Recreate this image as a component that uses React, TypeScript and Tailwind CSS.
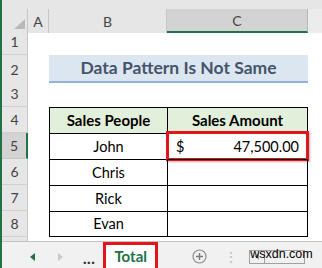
import React from 'react';

const GRID = 'grid grid-cols-[26px_21px_118px_141px_14px]';

const people = ['John', 'Chris', 'Rick', 'Evan'];

function RowHead({ n, active }: { n: number; active?: boolean }) {
  return (
    <div
      className={
        'flex items-end justify-center pb-[2px] text-[14px] text-[#444] ' +
        (active
          ? 'bg-[#d3d3d3] border-r-2 border-r-[#217346] border-b border-b-[#c6c6c6]'
          : 'bg-[#e6e6e6] border-r border-r-[#c6c6c6] border-b border-b-[#d0d0d0]')
      }
    >
      {n}
    </div>
  );
}

const App: React.FC = () => {
  return (
    <div className="w-[322px] h-[268px] overflow-hidden bg-white flex flex-col border-l-2 border-[#217346] font-['Lato','Liberation_Sans',sans-serif]">
      {/* top strip + column headers */}
      <div className="h-[9px] bg-[#e6e6e6] shrink-0"></div>
      <div className={GRID + ' h-[20px] shrink-0 text-[14px] text-[#444] border-b border-[#c6c6c6]'}>
        <div className="bg-[#e6e6e6] border-r border-[#c6c6c6] flex items-end justify-end pr-[2px] pb-[2px]">
          <svg width="13" height="12" viewBox="0 0 13 12">
            <polygon points="13,0 13,12 0,12" fill="#b9b9b9" />
          </svg>
        </div>
        <div className="bg-[#e6e6e6] border-r border-[#c6c6c6] flex items-center justify-center">A</div>
        <div className="bg-[#e6e6e6] border-r border-[#c6c6c6] flex items-center justify-center">B</div>
        <div className="bg-[#d3d3d3] border-r border-[#b8b8b8] border-b-2 border-b-[#217346] flex items-center justify-center pt-[1px]">C</div>
        <div className="bg-[#ececec]"></div>
      </div>

      {/* row 1 */}
      <div className={GRID + ' h-[26px] shrink-0'}>
        <RowHead n={1} />
        <div></div><div></div><div></div><div></div>
      </div>

      {/* row 2 - title */}
      <div className={GRID + ' h-[26px] shrink-0'}>
        <RowHead n={2} />
        <div></div>
        <div className="col-span-2 bg-[#dce6f1] border-b-2 border-[#95b3d7] flex items-center justify-center text-[17.5px] font-bold text-[#44546a]">
          Data Pattern Is Not Same
        </div>
        <div></div>
      </div>

      {/* row 3 */}
      <div className={GRID + ' h-[26px] shrink-0'}>
        <RowHead n={3} />
        <div></div><div></div><div></div><div></div>
      </div>

      {/* row 4 - table header */}
      <div className={GRID + ' h-[26px] shrink-0'}>
        <RowHead n={4} />
        <div></div>
        <div className="bg-[#e2efda] border-l border-t border-black flex items-center justify-center text-[15px] font-bold text-black">
          Sales People
        </div>
        <div className="bg-[#e2efda] border-l border-t border-r border-black flex items-center justify-center text-[15px] font-bold text-black">
          Sales Amount
        </div>
        <div></div>
      </div>

      {/* rows 5-8 */}
      {people.map((name, i) => (
        <div key={name} className={GRID + ' h-[26px] shrink-0'}>
          <RowHead n={5 + i} active={i === 0} />
          <div></div>
          <div
            className={
              'border-l border-t border-black flex items-center justify-center text-[14.5px] text-black ' +
              (i === 3 ? 'border-b' : '')
            }
          >
            {name}
          </div>
          <div
            className={
              'relative border-l border-t border-r border-black flex items-center justify-between pl-[8px] pr-[8px] text-[14.5px] text-black ' +
              (i === 3 ? 'border-b' : '')
            }
          >
            {i === 0 && (
              <>
                <span>$</span>
                <span>47,500.00</span>
                <div className="absolute -left-[2px] -top-[3px] -right-[2px] -bottom-[2px] border-[3px] border-[#e3151c] shadow-[1px_1px_2px_rgba(0,0,0,0.3)]"></div>
              </>
            )}
          </div>
          <div></div>
        </div>
      ))}

      {/* partial row 9 */}
      <div className={GRID + ' h-[4px] shrink-0'}>
        <div className="bg-[#e6e6e6] border-r border-[#c6c6c6]"></div>
        <div></div><div></div><div></div><div></div>
      </div>

      {/* sheet tabs bar */}
      <div className="flex-1 bg-[#f1f1f1] border-t border-[#c3c3c3] flex items-stretch">
        <div className="w-[28px]"></div>
        <div className="flex items-center">
          <svg width="5" height="8" viewBox="0 0 5 8">
            <polygon points="5,0 5,8 0,4" fill="#217346" />
          </svg>
        </div>
        <div className="w-[23px]"></div>
        <div className="flex items-center">
          <svg width="5" height="8" viewBox="0 0 5 8">
            <polygon points="0,0 0,8 5,4" fill="#c8c8c8" />
          </svg>
        </div>
        <div className="w-[20px]"></div>
        <div className="flex items-center pt-[3px] text-[15px] font-black text-[#333] tracking-[0.5px]">...</div>
        <div className="w-[8px]"></div>
        <div className="w-[55px] mb-[1px] bg-white border-[3px] border-[#e3151c] flex items-center justify-center text-[15px] font-bold text-[#217346]">
          Total
        </div>
        <div className="w-[34px]"></div>
        <div className="flex items-center">
          <svg width="15" height="15" viewBox="0 0 15 15">
            <circle cx="7.5" cy="7.5" r="6.5" fill="none" stroke="#8a8a8a" strokeWidth="1.2" />
            <path d="M7.5 4v7M4 7.5h7" stroke="#7a7a7a" strokeWidth="1.4" />
          </svg>
        </div>
        <div className="w-[17px]"></div>
        <div className="flex items-center text-[14px] text-[#c0c0c0] leading-none">⋮</div>
        <div className="w-[11px]"></div>
        <div className="relative flex items-center">
          <div className="w-[56px] h-[14px] border border-[#a0a0a0] flex">
            <div className="w-[15px] border-r border-[#a0a0a0] flex items-center justify-center">
              <svg width="4" height="7" viewBox="0 0 4 7">
                <polygon points="4,0 4,7 0,3.5" fill="#9a9a9a" />
              </svg>
            </div>
          </div>
          <span className="absolute left-[1px] top-[6px] text-[12.5px] leading-none text-black font-['Liberation_Sans',sans-serif] whitespace-nowrap">
            wsxdn.com
          </span>
        </div>
      </div>
    </div>
  );
};

export default App;
